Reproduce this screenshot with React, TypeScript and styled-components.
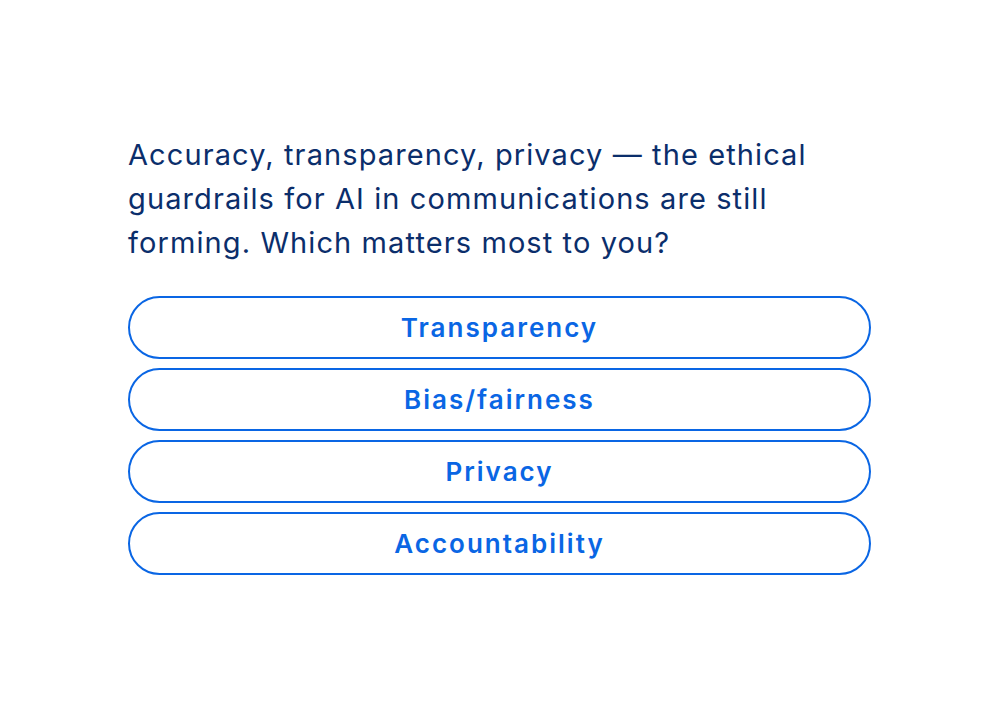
import styled, { createGlobalStyle } from "styled-components";

const GlobalStyle = createGlobalStyle`
  html, body {
    margin: 0;
    padding: 0;
    background: #ffffff;
  }
  body {
    font-family: Inter, "Noto Sans", sans-serif;
  }
`;

const Page = styled.div`
  width: 1000px;
  height: 710px;
  box-sizing: border-box;
  padding: 133px 129px 0 128px;
`;

const Question = styled.p`
  margin: 0 0 31px;
  font-size: 29px;
  line-height: 44px;
  font-weight: 400;
  color: #0b2e6b;
  letter-spacing: 1.1px;
`;

const Options = styled.div`
  display: flex;
  flex-direction: column;
  gap: 9px;
`;

const Option = styled.button`
  height: 63px;
  width: 100%;
  box-sizing: border-box;
  border: 2px solid #0a66e4;
  border-radius: 32px;
  background: #ffffff;
  color: #0a66e4;
  font-family: Inter, "Noto Sans", sans-serif;
  font-size: 26px;
  font-weight: 600;
  letter-spacing: 2px;
  cursor: pointer;
  padding: 0;
`;

const choices = ["Transparency", "Bias/fairness", "Privacy", "Accountability"];

export default function App() {
  return (
    <>
      <GlobalStyle />
      <Page>
        <Question>
          Accuracy, transparency, privacy — the ethical guardrails for AI in
          communications are still forming. Which matters most to you?
        </Question>
        <Options>
          {choices.map((c) => (
            <Option key={c}>{c}</Option>
          ))}
        </Options>
      </Page>
    </>
  );
}
